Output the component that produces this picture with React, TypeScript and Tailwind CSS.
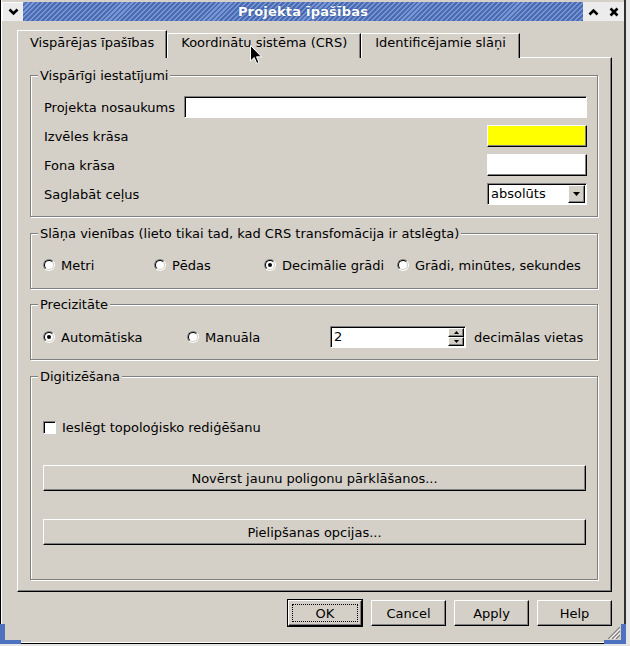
import React from 'react';

// Qt3 style bevels
const raised =
  'border border-t-white border-l-white border-r-black border-b-black shadow-[inset_-1px_-1px_0_#808080]';
const sunken =
  'border border-t-[#808080] border-l-[#808080] border-r-white border-b-white shadow-[inset_1px_1px_0_#000]';

type Kids = { children?: React.ReactNode };

const GroupBox: React.FC<Kids & { title: string; className?: string; inner?: string }> = ({
  title,
  className = '',
  inner = '',
  children,
}) => (
  <fieldset className={`min-w-0 border border-[#808080] shadow-[inset_1px_1px_0_#fff,1px_1px_0_#fff] ${className}`}>
    <legend className="ml-[7px] px-[2px] bg-[#d4d0c8] leading-[15px]">{title}</legend>
    <div className={inner}>{children}</div>
  </fieldset>
);

const Radio: React.FC<{ label: string; checked?: boolean; className?: string }> = ({ label, checked, className = '' }) => (
  <div className={`flex items-center gap-[6px] h-[16px] ${className}`}>
    <span className="shrink-0 w-[12px] h-[12px] rounded-full border border-t-[#808080] border-l-[#808080] border-r-white border-b-white">
      <span className="flex items-center justify-center w-full h-full rounded-full bg-white border border-t-black border-l-black border-r-[#d4d0c8] border-b-[#d4d0c8]">
        {checked && <span className="w-[4px] h-[4px] rounded-full bg-black" />}
      </span>
    </span>
    <span className="whitespace-nowrap">{label}</span>
  </div>
);

const Arrow: React.FC<{ up?: boolean; w?: number; h?: number }> = ({ up, w = 7, h = 4 }) => (
  <svg width={w} height={h} viewBox={`0 0 ${w} ${h}`}>
    <polygon points={up ? `0,${h} ${w},${h} ${w / 2},0` : `0,0 ${w},0 ${w / 2},${h}`} fill="#000" />
  </svg>
);

const PushButton: React.FC<Kids & { className?: string }> = ({ children, className = '' }) => (
  <div className={`flex items-center justify-center bg-[#d4d0c8] ${raised} ${className}`}>{children}</div>
);

const tabs = ['Vispārējas īpašības', 'Koordinātu sistēma (CRS)', 'Identificējamie slāņi'];

export default function App() {
  return (
    <div className="w-[630px] h-[646px] bg-[#e6e6e6] font-['DejaVu_Sans',sans-serif] text-[13px] leading-[15px] text-black">
      <div className="relative w-[626px] h-[644px] bg-[#d4d0c8] border-l border-r-2 border-b border-l-black border-r-[#303030] border-b-black shadow-[inset_1px_0_0_#fff,inset_0_-1px_0_#fff]">
        {/* title bar */}
        <div className="flex h-[22px] pt-[2px] pb-[1px] pl-[1px]">
          <div className="w-[21px] flex items-center justify-center bg-[#ececec] border-t border-l border-white">
            <svg width="11" height="8" viewBox="0 0 11 8">
              <polyline points="1.5,1.5 5.5,5.5 9.5,1.5" fill="none" stroke="#000" strokeWidth="2.6" />
            </svg>
          </div>
          <div className="flex-1 flex items-center justify-center bg-[repeating-linear-gradient(135deg,#7896d4_0px,#7896d4_1.5px,#4b6cb3_1.5px,#4b6cb3_3.5px)]">
            <span className="font-bold text-white tracking-[0.2px] [text-shadow:0_0_2px_#2c4a8a]">Projekta īpašības</span>
          </div>
          <div className="w-[21px] flex items-center justify-center bg-[#ececec]">
            <svg width="11" height="8" viewBox="0 0 11 8">
              <polyline points="1.5,6.5 5.5,2.5 9.5,6.5" fill="none" stroke="#000" strokeWidth="2.6" />
            </svg>
          </div>
          <div className="w-[20px] flex items-center justify-center bg-[#ececec]">
            <svg width="10" height="10" viewBox="0 0 10 10">
              <path d="M1.5 1.5 L8.5 8.5 M8.5 1.5 L1.5 8.5" stroke="#000" strokeWidth="2.6" />
            </svg>
          </div>
        </div>

        {/* dialog body */}
        <div className="pl-[16px] pt-[8px]">
          <div className="flex items-end h-[28px] -mb-[1px]">
            {tabs.map((t, i) =>
              i === 0 ? (
                <div
                  key={t}
                  className="relative z-10 h-[28px] px-[12px] pt-[4px] bg-[#d4d0c8] border-l border-t border-r border-t-white border-l-white border-r-black shadow-[inset_-1px_0_0_#808080] whitespace-nowrap"
                >
                  {t}
                </div>
              ) : (
                <div
                  key={t}
                  className="h-[25px] px-[13px] pt-[1px] bg-[#d4d0c8] border-l border-t border-r border-t-white border-l-white border-r-black shadow-[inset_-1px_0_0_#808080] whitespace-nowrap"
                >
                  {t}
                </div>
              )
            )}
          </div>

          <div className="w-[595px] pt-[10px] pl-[12px] pr-[13px] pb-[11px] bg-[#d4d0c8] border border-t-white border-l-white border-r-black border-b-black shadow-[inset_-1px_-1px_0_#808080]">
            <GroupBox title="Vispārīgi iestatījumi" className="pt-[13px] pb-[11px]" inner="pl-[12px] pr-[10px]">
              <div className="flex flex-col gap-[7px]">
                <div className="flex items-center h-[22px]">
                  <span className="w-[141px] pl-[1px] whitespace-nowrap">Projekta nosaukums</span>
                  <div className={`flex-1 h-[22px] bg-white ${sunken}`} />
                </div>
                <div className="flex items-center h-[22px]">
                  <span className="flex-1 pl-[1px]">Izvēles krāsa</span>
                  <div className={`w-[100px] h-[22px] bg-[#ffff00] ${raised}`} />
                </div>
                <div className="flex items-center h-[22px]">
                  <span className="flex-1 pl-[1px]">Fona krāsa</span>
                  <div className={`w-[100px] h-[22px] bg-white ${raised}`} />
                </div>
                <div className="flex items-center h-[22px]">
                  <span className="flex-1 pl-[1px]">Saglabāt ceļus</span>
                  <div className={`flex w-[100px] h-[22px] bg-white ${sunken}`}>
                    <span className="flex-1 pl-[3px] leading-[20px]">absolūts</span>
                    <span className={`w-[17px] my-[1px] mr-[1px] flex items-center justify-center bg-[#d4d0c8] ${raised}`}>
                      <Arrow />
                    </span>
                  </div>
                </div>
              </div>
            </GroupBox>

            <GroupBox
              title="Slāņa vienības (lieto tikai tad, kad CRS transfomācija ir atslēgta)"
              className="mt-[9px] pt-[16px] pb-[15px]"
              inner="pl-[12px]"
            >
              <div className="flex">
                <Radio label="Metri" className="w-[111px]" />
                <Radio label="Pēdas" className="w-[110px]" />
                <Radio label="Decimālie grādi" checked className="w-[133px]" />
                <Radio label="Grādi, minūtes, sekundes" />
              </div>
            </GroupBox>

            <GroupBox title="Precizitāte" className="mt-[8px] pt-[14px] pb-[11px]" inner="pl-[12px]">
              <div className="flex items-center h-[22px]">
                <Radio label="Automātiska" checked className="w-[144px]" />
                <Radio label="Manuāla" className="w-[143px]" />
                <div className={`flex w-[136px] h-[22px] bg-white ${sunken}`}>
                  <span className="flex-1 pl-[3px] leading-[20px]">2</span>
                  <div className="flex flex-col w-[16px] my-[1px] mr-[1px]">
                    <span className={`flex-1 flex items-center justify-center bg-[#d4d0c8] ${raised}`}>
                      <Arrow up w={5} h={3} />
                    </span>
                    <span className={`flex-1 flex items-center justify-center bg-[#d4d0c8] ${raised}`}>
                      <Arrow w={5} h={3} />
                    </span>
                  </div>
                </div>
                <span className="ml-[8px] whitespace-nowrap">decimālas vietas</span>
              </div>
            </GroupBox>

            <GroupBox title="Digitizēšana" className="mt-[9px] pt-[35px] pb-[34px]" inner="pl-[12px] pr-[11px]">
              <div className="flex items-center gap-[6px] h-[16px]">
                <span className={`shrink-0 w-[13px] h-[13px] bg-white ${sunken}`} />
                <span>Ieslēgt topoloģisko rediģēšanu</span>
              </div>
              <PushButton className="mt-[30px] h-[26px]">Novērst jaunu poligonu pārklāšanos...</PushButton>
              <PushButton className="mt-[28px] h-[26px]">Pielipšanas opcijas...</PushButton>
            </GroupBox>
          </div>

          <div className="w-[595px] mt-[7px] flex items-center justify-end gap-[8px]">
            <div className="border border-black">
              <div className={`w-[74px] h-[26px] p-[3px] flex bg-[#d4d0c8] ${raised}`}>
                <div className="flex-1 flex items-center justify-center border border-dotted border-black">OK</div>
              </div>
            </div>
            <PushButton className="w-[75px] h-[26px]">Cancel</PushButton>
            <PushButton className="w-[75px] h-[26px]">Apply</PushButton>
            <PushButton className="w-[75px] h-[26px]">Help</PushButton>
          </div>
        </div>

        {/* resize grips */}
        <div className="absolute left-[-1px] bottom-[-1px] w-[21px] h-[20px] border-l-[5px] border-b-[4px] border-[#4f72c0]" />
        <div className="absolute right-[-2px] bottom-[-1px] w-[22px] h-[20px] border-r-[5px] border-b-[4px] border-[#4f72c0]" />
        <svg className="absolute right-[4px] bottom-[4px]" width="12" height="12" viewBox="0 0 12 12">
          <path d="M12 0 L0 12 M12 4 L4 12 M12 8 L8 12" stroke="#808080" strokeWidth="1.2" />
          <path d="M12 2 L2 12 M12 6 L6 12" stroke="#fff" strokeWidth="1" />
        </svg>

        {/* mouse pointer */}
        <svg className="absolute left-[249px] top-[45px]" width="13" height="20" viewBox="0 0 13 20">
          <path d="M0.5 0.5 L0.5 16 L4.2 12.5 L6.8 18.5 L9 17.6 L6.5 11.8 L11.5 11.8 Z" fill="#000" stroke="#fff" strokeWidth="1" />
        </svg>
      </div>
    </div>
  );
}
